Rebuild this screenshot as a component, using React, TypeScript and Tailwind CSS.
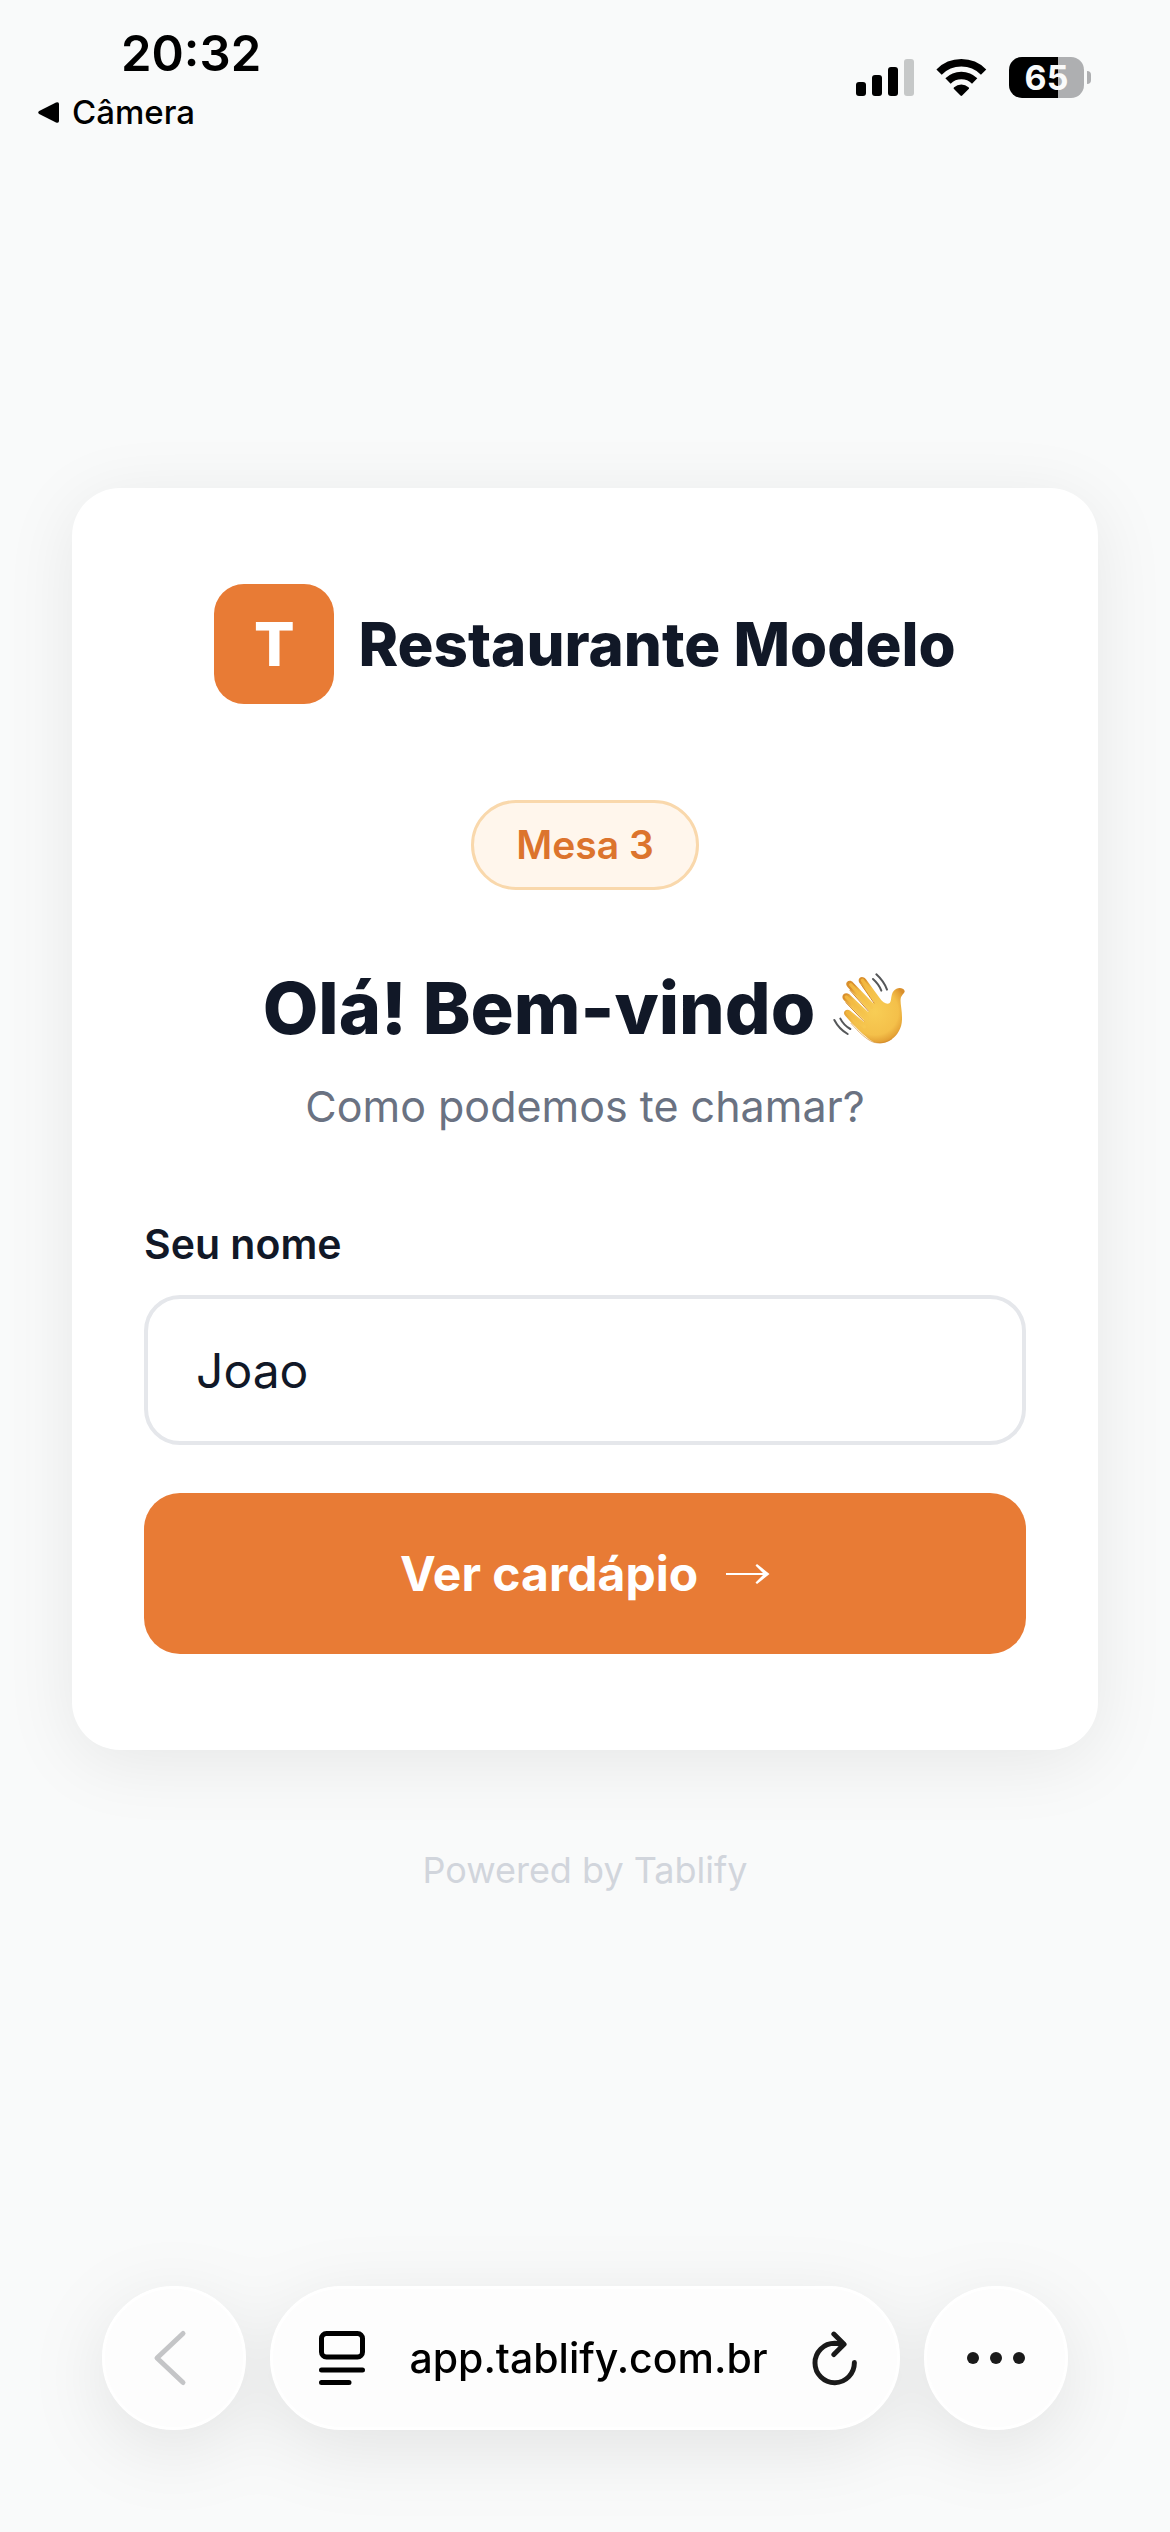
import { useState } from "react";

function SignalIcon() {
  return (
    <svg viewBox="0 0 58 37" className="h-[37px] w-[58px]" aria-hidden="true">
      <rect x="0" y="23" width="10" height="14" rx="3" />
      <rect x="16" y="16" width="10" height="21" rx="3" />
      <rect x="32" y="8" width="10" height="29" rx="3" />
      <rect x="48" y="0" width="10" height="37" rx="3" fill="#c6c8c8" />
    </svg>
  );
}

function WifiIcon() {
  return (
    <svg viewBox="348 87 153 111" className="h-[37px] w-[51px]" aria-hidden="true">
      <g fill="none" stroke="#000" strokeWidth="22.5">
        <path d="M357.2 126.2A94.5 94.5 0 0 1 490.8 126.2" />
        <path d="M384 153A56.5 56.5 0 0 1 464 153" />
      </g>
      <path d="M421.5 196.5L402 177Q399.500 174 402.500 171.500A33 33 0 0 1 445.500 171.500Q448.500 174 446 177L426.500 196.500Q424 199 421.500 196.500Z" />
    </svg>
  );
}

function Battery({ level }: { level: number }) {
  return (
    <div className="flex items-center gap-[3px]" role="img" aria-label={`${level}%`}>
      <div className="flex h-[41px] w-[75px] items-center justify-center rounded-[13px] bg-[linear-gradient(to_right,#000_65%,#aeafb1_65%)] text-[34px] leading-none font-bold text-[#f9fafa]">
        {level}
      </div>
      <div className="h-[13px] w-1 rounded-r-full bg-[#aeafb1]" />
    </div>
  );
}

function StatusBar() {
  return (
    <header className="flex items-start justify-between pt-6 pr-[79px] pl-[38px] text-black">
      <div>
        <p className="pl-[83px] text-[49px] leading-[60px] font-semibold">20:32</p>
        <button className="mt-1 flex items-center gap-[13px] text-[33px] leading-[48px] font-medium">
          <svg viewBox="0 0 21 21" className="size-[21px]" aria-hidden="true">
            <path d="M1.200 9L18 .5Q21-.6 21 2V19Q21 21.600 18 20.500L1.200 12Q-.8 10.500 1.200 9Z" />
          </svg>
          Câmera
        </button>
      </div>
      <div className="flex items-center gap-[22px] pt-[33px]">
        <SignalIcon />
        <WifiIcon />
        <Battery level={65} />
      </div>
    </header>
  );
}

function WavingHand() {
  return (
    <svg viewBox="90 90 228 228" className="size-[76px]" role="img" aria-label="👋">
      <defs>
        <radialGradient id="skin" gradientUnits="userSpaceOnUse" cx="222" cy="215" r="100">
          <stop offset="0" stopColor="#f8cd55" />
          <stop offset=".7" stopColor="#f4c04a" />
          <stop offset=".9" stopColor="#e5a437" />
          <stop offset="1" stopColor="#d98f2c" />
        </radialGradient>
        <linearGradient id="finger" x1="0" y1="0" x2="1" y2="1">
          <stop offset="0" stopColor="#f2b63d" />
          <stop offset="1" stopColor="#f6c750" />
        </linearGradient>
      </defs>
      <path
        fill="url(#skin)"
        d="M131 225C124 214 137 204 148 212L186 244Q190 246 189 241L128 180C117 167 132 153 145 163L199 214Q204 217 202 211L139 140C128 127 146 115 157 128L216 189Q221 191 218 185L175 128C167 114 184 104 195 118L236 174C246 188 258 195 266 189C273 182 268 165 278 153C287 142 306 141 311 153C312 159 301 164 299 176C297 190 304 211 303 239C302 264 291 283 272 298C255 311 231 314 214 304C192 291 151 250 131 225Z"
      />
      <g fill="none" stroke="url(#finger)" strokeLinecap="round" strokeWidth="10">
        <path d="M184 121L230 186" />
        <path d="M149 134L212 202" />
        <path d="M136 171L200 231" />
        <path d="M140 218L190 260" />
      </g>
      <g fill="none" stroke="#d38a2a" strokeLinecap="round" strokeWidth="3">
        <path d="M183 137L219 189" />
        <path d="M147 151L202 213" />
        <path d="M135 188L188 243" />
        <path d="M150 250C174 277 197 299 216 306C235 312 256 308 272 297" opacity=".65" />
      </g>
      <g fill="none" stroke="#555759" strokeLinecap="round" strokeWidth="6">
        <path d="M226 103Q249 124 258 149" />
        <path d="M216 117Q234 133 241 152" />
        <path d="M100 240Q114 267 140 282" />
        <path d="M118 236Q128 256 148 267" />
      </g>
    </svg>
  );
}

function WelcomeCard() {
  const [name, setName] = useState("Joao");

  return (
    <section className="rounded-[48px] bg-white px-[72px] py-24 shadow-[0_12px_72px_rgba(0,0,0,0.08)]">
      <div className="flex items-center justify-center gap-6">
        <div className="flex size-[120px] items-center justify-center rounded-[30px] bg-[#e87b35] text-[60px] font-extrabold text-white">
          T
        </div>
        <p className="text-[60px] leading-[72px] font-extrabold whitespace-nowrap">Restaurante Modelo</p>
      </div>

      <div className="mt-24 flex justify-center">
        <span className="rounded-full border-3 border-[#f9d8ac] bg-[#fff6ec] px-[42px] py-[18px] text-[39px] leading-[48px] font-semibold text-[#dc742d]">
          Mesa 3
        </span>
      </div>

      <h1 className="mt-[72px] flex items-center justify-center gap-4 text-[72px] leading-[92px] font-extrabold whitespace-nowrap">
        Olá! Bem-vindo
        <WavingHand />
      </h1>
      <p className="mt-[18px] text-center text-[43px] leading-[68px] text-gray-500">Como podemos te chamar?</p>

      <form className="mt-[72px]" onSubmit={(e) => e.preventDefault()}>
        <label htmlFor="name" className="block text-[41px] leading-[64px] font-semibold">
          Seu nome
        </label>
        <input
          id="name"
          value={name}
          onChange={(e) => setName(e.target.value)}
          className="mt-[19px] block h-[150px] w-full rounded-[36px] border-4 border-gray-200 bg-white px-12 text-[48px] outline-none"
        />
        <button
          type="submit"
          disabled={!name.trim()}
          className="mt-12 flex h-[161px] w-full items-center justify-center gap-7 rounded-[36px] bg-[#e87b35] text-[48px] font-bold text-white"
        >
          Ver cardápio
          <svg viewBox="0 0 44 20" className="h-5 w-11" aria-hidden="true">
            <path d="M0 9H37L29.500 1.500L31 0L43.500 10L31 20L29.500 18.500L37 11H0Z" fill="currentColor" />
          </svg>
        </button>
      </form>
    </section>
  );
}

function BrowserBar() {
  const surface = "flex h-36 items-center rounded-full border-3 border-white bg-[#fdfdfd]";

  // one shadow for the whole bar, so no pill darkens the one beside it
  return (
    <nav className="flex gap-6 px-[102px] pb-[102px] drop-shadow-[0_18px_36px_rgba(0,0,0,0.09)]">
      <button aria-label="Voltar" className={`${surface} w-36 shrink-0 justify-center`}>
        <svg viewBox="0 0 40 60" className="mr-2 h-[60px] w-10" fill="none" stroke="#c4c5c7" strokeWidth="5" strokeLinecap="round" strokeLinejoin="round" aria-hidden="true">
          <path d="M33 5.500L7 30L33 54.500" />
        </svg>
      </button>
      <div className={`${surface} min-w-0 flex-1 justify-between pr-10 pl-[46px] text-black`}>
        <button aria-label="Menu da página">
          <svg viewBox="0 0 46 54" className="h-[54px] w-[46px]" fill="none" stroke="#000" strokeWidth="5" strokeLinecap="round" aria-hidden="true">
            <rect x="2.500" y="2.500" width="41" height="23.500" rx="5" />
            <path d="M2.500 39H43.500M2.500 51.500H30" />
          </svg>
        </button>
        <button className="text-[41px] leading-[60px] font-medium">app.tablify.com.br</button>
        <button aria-label="Recarregar">
          <svg viewBox="334 235 136 166" className="h-[55px] w-[45px]" fill="none" stroke="#1a1a1a" strokeWidth="15" strokeLinecap="round" strokeLinejoin="round" aria-hidden="true">
            <path d="M462 330A59.500 59.500 0 1 1 403 272L428 275M400 244L431 275L400 306" />
          </svg>
        </button>
      </div>
      <button aria-label="Mais opções" className={`${surface} w-36 shrink-0 justify-center`}>
        <svg viewBox="0 0 58 12" className="h-3 w-[58px]" fill="#1a1a1a" aria-hidden="true">
          <circle cx="6" cy="6" r="6" />
          <circle cx="29" cy="6" r="6" />
          <circle cx="52" cy="6" r="6" />
        </svg>
      </button>
    </nav>
  );
}

export default function App() {
  return (
    <div className="flex min-h-screen flex-col bg-[#f9fafa] font-['Inter',sans-serif] text-[#111827]">
      <StatusBar />
      <main className="flex-1 px-[72px] pt-[352px] pb-24">
        <WelcomeCard />
        <p className="mt-24 text-center text-[36px] leading-[48px] text-gray-300">Powered by Tablify</p>
      </main>
      <BrowserBar />
    </div>
  );
}
